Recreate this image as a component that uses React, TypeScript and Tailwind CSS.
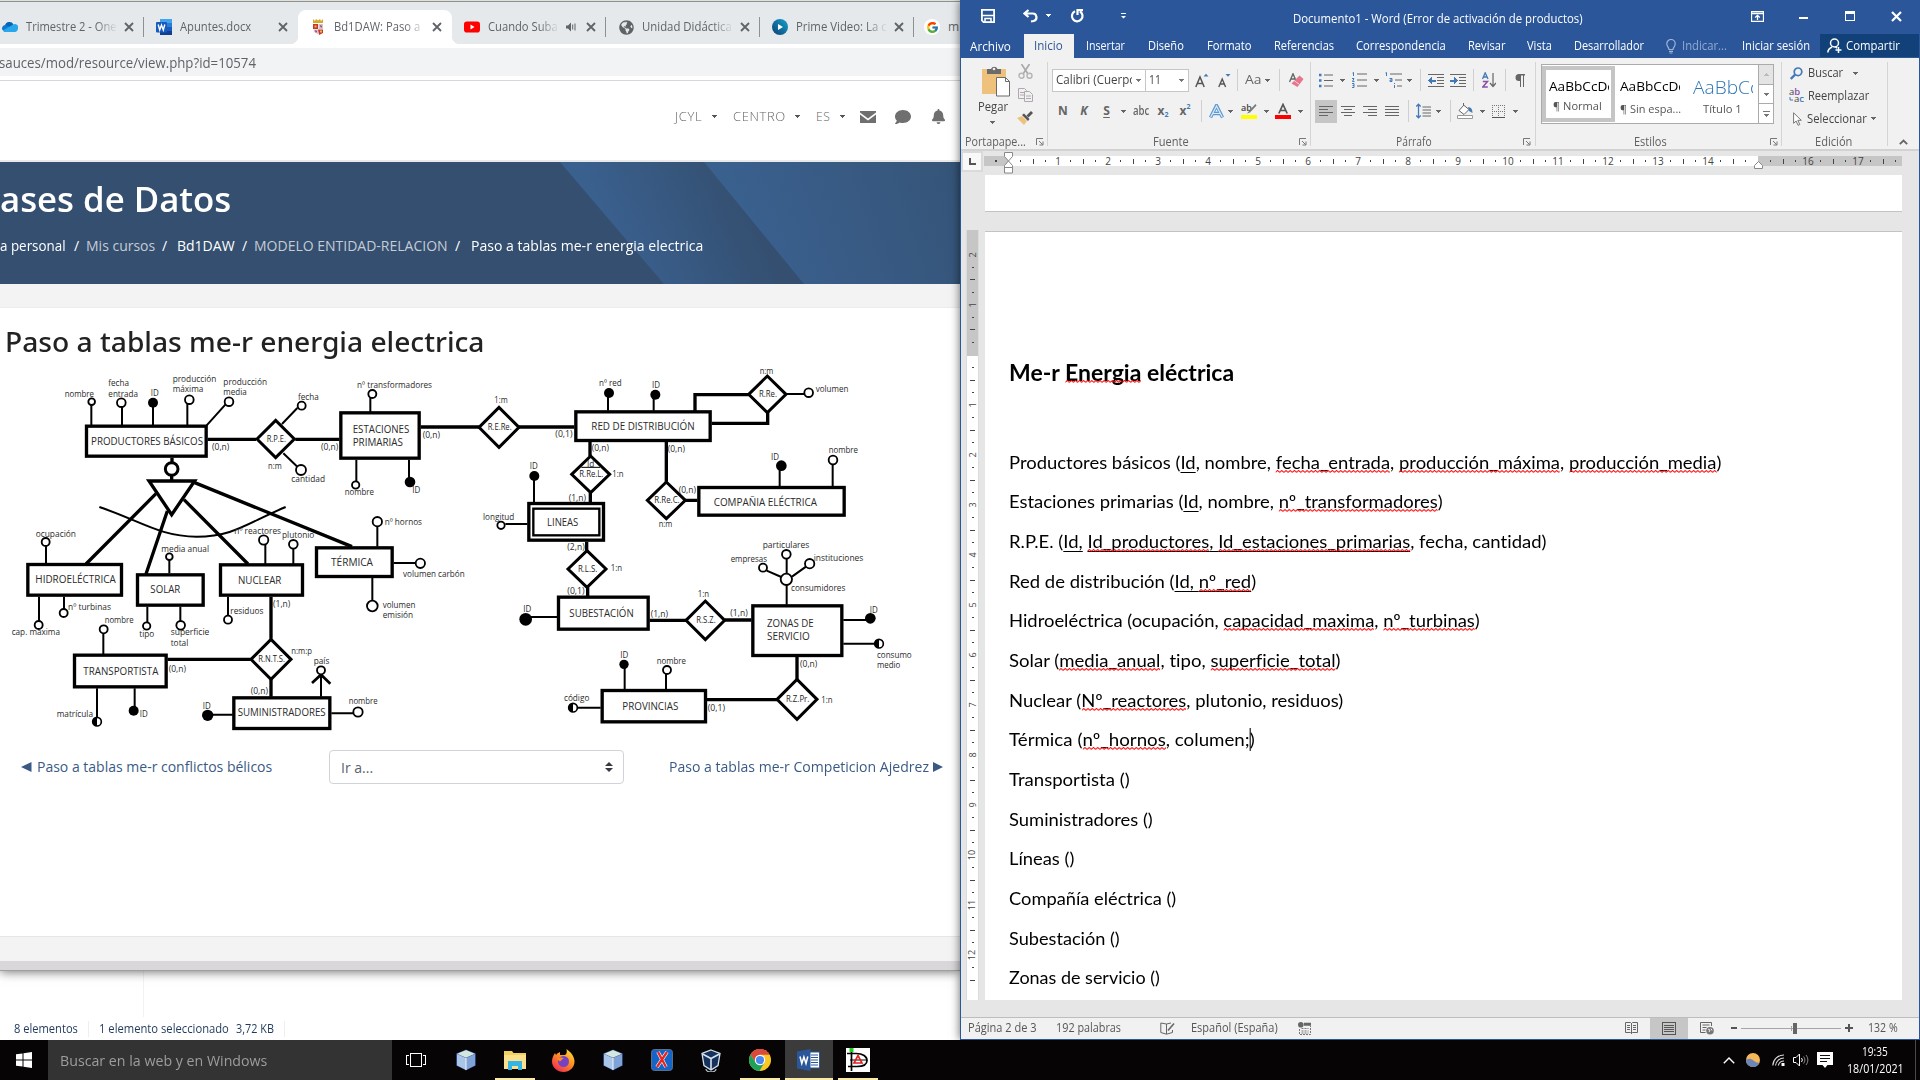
import React, { useLayoutEffect, useRef, useState } from "react";
import type { ReactNode } from "react";
import { FcGoogle } from "react-icons/fc";
import { FaBell, FaComment, FaGlobeAmericas } from "react-icons/fa";

/* ---------- helpers ---------- */

function Fit({ w, className = "", children }: { w: number; className?: string; children: ReactNode }) {
  const ref = useRef<HTMLSpanElement>(null);
  const [k, setK] = useState(1);
  useLayoutEffect(() => {
    if (ref.current) {
      const n = ref.current.offsetWidth;
      if (n > 0) setK(w / n);
    }
  }, [w]);
  return (
    <span className={"block shrink-0 whitespace-nowrap " + className} style={{ width: w }}>
      <span ref={ref} className="inline-block origin-left whitespace-pre" style={{ transform: `scaleX(${k})` }}>
        {children}
      </span>
    </span>
  );
}

function Caret({ className = "" }: { className?: string }) {
  return (
    <svg width="5" height="3" viewBox="0 0 5 3" className={"shrink-0 " + className} shapeRendering="crispEdges">
      <path d="M0 0h5L2.5 3z" fill="currentColor" />
    </svg>
  );
}

function Slot({ className = "", children }: { className?: string; children?: ReactNode }) {
  return <div className={"flex shrink-0 items-center justify-center text-[#666] " + className}>{children}</div>;
}

const Sep = () => <div className="h-[22px] w-px bg-[#cfcfcf]" />;

/* ---------- browser ---------- */

function CloseX() {
  return (
    <svg width="10" height="10" viewBox="0 0 10 10" className="shrink-0">
      <path d="M1 1l8 8M9 1l-8 8" stroke="#5f6368" strokeWidth="1.8" />
    </svg>
  );
}

const OneDrive = () => (
  <svg width="16" height="16" viewBox="0 0 16 16">
    <path d="M3 6.500A4.600 4.600 0 0 1 11.500 5.500L9 9H3z" fill="#0364b8" />
    <path d="M.2 10.500A3.400 3.400 0 0 1 4.500 6.200L13 10.500 8 13H3z" fill="#0f78d4" />
    <path d="M11.300 5.600A3.300 3.300 0 0 1 16 9.800c-.3 2-1.500 3.200-3 3.200H3.500C2 13 1.200 12.300.8 11.500z" fill="#28a8ea" />
  </svg>
);

const WordFile = () => (
  <svg width="16" height="16" viewBox="0 0 16 16">
    <path d="M4 0h12v4H4z" fill="#41a5ee" />
    <path d="M4 4h12v4H4z" fill="#2b7cd3" />
    <path d="M4 8h12v4H4z" fill="#185abd" />
    <path d="M4 12h12v4H4z" fill="#103f91" />
    <rect y="3" width="11" height="10.500" rx="1" fill="#185abd" />
    <path d="M2.200 5.500L3.700 11 5.500 6 7.300 11 8.800 5.500" stroke="#fff" strokeWidth="1.400" fill="none" />
  </svg>
);

const Shield = () => (
  <svg width="12" height="16" viewBox="0 0 12 16">
    <path d="M1 0l2 2 1-2 2 1.500L8 0l1 2 2-2v4H1z" fill="#d6a92b" />
    <path d="M1 5h5v5H1z" fill="#c3372e" />
    <path d="M6.500 5H11v5H6.500z" fill="#d9c0cb" />
    <path d="M1.500 10.500H6V15l-4-2z" fill="#d9c0cb" />
    <path d="M6 10.500h5V14l-4 2z" fill="#c3372e" />
    <path d="M2.500 6.500h2v2h-2zM8 11.500h2v2H8z" fill="#e8b93b" />
    <path d="M8 6l2 1-1 2zM3 11l2 1-1 2z" fill="#7d2a5e" />
  </svg>
);

const YouTube = () => (
  <svg width="16" height="16" viewBox="0 0 16 16">
    <rect y="2.500" width="16" height="11" rx="2.800" fill="#f00" />
    <path d="M6.500 5.500l4 2.500-4 2.500z" fill="#fff" />
  </svg>
);

const Prime = () => (
  <svg width="16" height="16" viewBox="0 0 16 16">
    <defs>
      <linearGradient id="pv" x1="1" y1="0" x2="0" y2="1">
        <stop offset="0" stopColor="#16a3cf" />
        <stop offset="1" stopColor="#0c3e73" />
      </linearGradient>
    </defs>
    <circle cx="8" cy="8" r="8" fill="url(#pv)" />
    <path d="M6 5l5 3-5 3z" fill="#fff" />
  </svg>
);

type TabData = { icon: ReactNode; title: string; w: number; fade?: boolean; active?: boolean; audio?: boolean; sep?: boolean };

const tabs: TabData[] = [
  { icon: <OneDrive />, title: "Trimestre 2 - One", w: 91, fade: true, sep: true },
  { icon: <WordFile />, title: "Apuntes.docx", w: 71 },
  { icon: <Shield />, title: "Bd1DAW: Paso a", w: 86, fade: true, active: true },
  { icon: <YouTube />, title: "Cuando Suba", w: 70, fade: true, audio: true, sep: true },
  { icon: <FaGlobeAmericas size={15} color="#5f6368" />, title: "Unidad Didáctica", w: 90, fade: true, sep: true },
  { icon: <Prime />, title: "Prime Video: La c", w: 91, fade: true, sep: true },
];

function BrowserTab({ t }: { t: TabData }) {
  return (
    <div
      className={
        "relative flex h-[34px] w-[154px] shrink-0 items-center pl-3 " + (t.active ? "rounded-t-lg bg-white" : "")
      }
    >
      {t.active && (
        <>
          <div className="absolute bottom-0 -left-2 size-2 bg-[radial-gradient(circle_at_0_0,#e6e9ec_8px,#fff_8.5px)]" />
          <div className="absolute -right-2 bottom-0 size-2 bg-[radial-gradient(circle_at_100%_0,#e6e9ec_8px,#fff_8.5px)]" />
        </>
      )}
      <div className="flex w-4 shrink-0 justify-center">{t.icon}</div>
      <div
        className={
          "ml-2 w-[92px] overflow-hidden " +
          (t.fade ? (t.audio ? "[mask-image:linear-gradient(to_right,#000_55%,transparent_78%)]" : "[mask-image:linear-gradient(to_right,#000_76%,transparent)]") : "")
        }
      >
        <Fit w={t.w} className="text-[12px] leading-[18px] text-[#5f6368]">
          {t.title}
        </Fit>
      </div>
      {t.audio && (
        <svg width="10" height="10" viewBox="0 0 10 10" className="-ml-3.5 mr-1">
          <path d="M0 3.500h2L5 .5v9l-3-3H0z" fill="#5f6368" />
          <path d="M6.700 2.500v5M9 1.500v7" stroke="#5f6368" strokeWidth="1" />
        </svg>
      )}
      <div className="ml-[6px]">
        <CloseX />
      </div>
      {t.sep && <div className="absolute top-[7px] right-0 h-5 w-px bg-[#8d9196]" />}
    </div>
  );
}

function Banner() {
  return (
    <div className="relative h-[122px] overflow-hidden bg-[#344f70] text-white">
      <svg width="960" height="122" viewBox="0 0 960 122" className="absolute inset-0">
        <defs>
          <linearGradient id="b1" gradientUnits="userSpaceOnUse" x1="610" y1="72" x2="740" y2="18">
            <stop offset="0" stopColor="#3a608e" />
            <stop offset="1" stopColor="#344f70" />
          </linearGradient>
          <linearGradient id="b2" gradientUnits="userSpaceOnUse" x1="750" y1="75" x2="980" y2="0">
            <stop offset="0" stopColor="#3a608e" />
            <stop offset="1" stopColor="#355376" />
          </linearGradient>
        </defs>
        <path d="M560 0h144l100 122H664z" fill="url(#b1)" />
        <path d="M704 0h256v122H804z" fill="url(#b2)" />
      </svg>
      <div className="relative flex h-full flex-col">
        <Fit w={231} className="mt-[12px] text-[34px] leading-[50px] font-semibold">
          ases de Datos
        </Fit>
        <div className="mt-[11px] flex items-center text-[14px] leading-[22px] font-medium">
          <Fit w={66}>a personal</Fit>
          <Fit w={5} className="ml-[8px]">/</Fit>
          <Fit w={69} className="ml-[7px] font-normal text-[#c5ccd5]">Mis cursos</Fit>
          <Fit w={5} className="ml-[7px]">/</Fit>
          <Fit w={58} className="ml-[10px]">Bd1DAW</Fit>
          <Fit w={5} className="ml-[7px]">/</Fit>
          <Fit w={194} className="ml-[7px] font-normal text-[#c5ccd5]">MODELO ENTIDAD-RELACION</Fit>
          <Fit w={5} className="ml-[7px]">/</Fit>
          <Fit w={232} className="ml-[11px]">Paso a tablas me-r energia electrica</Fit>
        </div>
      </div>
    </div>
  );
}

/* ---------- entity-relationship diagram (3 units per pixel) ---------- */

const boxes: [number, number, number, number][] = [
  [255, 344, 623, 443],
  [1018, 304, 1262, 449],
  [79, 759, 369, 860],
  [408, 790, 614, 890],
  [657, 760, 912, 860],
  [945, 709, 1181, 804],
  [219, 1031, 503, 1135],
  [697, 1159, 994, 1260],
  [1723, 301, 2135, 396],
  [2092, 528, 2537, 620],
  [1582, 576, 1815, 695],
  [1671, 857, 1949, 962],
  [2254, 883, 2530, 1041],
  [1802, 1137, 2121, 1240],
];

const diamonds: [number, number, number, number, string, number][] = [
  [827, 387, 56, 56, "R.P.E.", 58],
  [813, 1048, 60, 60, "R.N.T.S.", 80],
  [1497, 352, 60, 60, "R.E.Re.", 72],
  [1772, 493, 57, 55, "R.Re.L.", 72],
  [1999, 571, 57, 55, "R.Re.C.", 76],
  [1761, 777, 57, 55, "R.L.S.", 58],
  [2116, 931, 58, 58, "R.S.Z.", 58],
  [2302, 253, 56, 55, "R.Re.", 54],
  [2391, 1168, 60, 60, "R.Z.Pr.", 70],
];

const heavy =
  "M623 388H768M886 388H1018M1262 351H1440M1556 351H1723M516 443V456M515 498V512M468 551L258 762M502 603L438 792M552 569L744 762M584 518L1056 710M813 860V986M503 1048H752M813 1108V1160M1770 396V438M1771 548V578M1999 396V515M2056 571H2092M1760 695V722M1763 832V858M1949 931H2058M2175 930H2254M2085 304V254H2246M2135 340H2303V306M2391 1041V1108M2121 1169H2331";

const thin =
  "M274 284V346M366 290V346M459 280V346M562 282V346M676 284L620 346M892 294L846 342M850 430L892 470M1111 262V306M1069 449V514M1227 449V516M138 708V760M117 860V934M192 860V898M508 750V790M442 890V938M541 890V934M796 702V762M880 714V762M684 860V918M1132 648V710M1181 759H1248M1117 804V872M310 970V1032M291 1135V1235M404 1135V1202M624 1214H698M963 1092V1160M994 1210H1062M1824 250V302M1961 254V302M2360 252H2412M1602 498V577M1516 642H1582M2339 468V530M2498 462V530M1577 921H1671M2360 745V790M2300 782L2344 801M2418 770L2376 800M2360 824V884M2530 930H2610M2530 1001H2638M1874 1064V1138M1998 1092V1138M1719 1193H1802";

const openDots: [number, number, number][] = [
  [275, 275, 10], [364, 278, 13], [568, 269, 13], [687, 275, 13], [905, 287, 12], [903, 480, 15], [1117, 252, 12],
  [1067, 525, 11], [137, 696, 12], [116, 945, 12], [191, 909, 12], [508, 740, 10], [440, 948, 11], [542, 946, 13],
  [791, 690, 14], [880, 703, 13], [684, 929, 12], [1132, 635, 14], [1261, 760, 14], [1117, 888, 16], [311, 958, 12],
  [963, 1081, 12], [1074, 1206, 14], [2426, 248, 13], [2499, 450, 13], [1503, 646, 11], [2359, 733, 13],
  [2289, 773, 12], [2429, 761, 14], [2359, 808, 17], [2001, 1080, 12],
];

const fullDots: [number, number, number][] = [
  [459, 278, 15], [1230, 516, 16], [401, 1202, 15], [623, 1216, 17], [1827, 249, 15], [1966, 254, 15], [1603, 498, 15],
  [2344, 467, 16], [1577, 928, 19], [2611, 925, 16], [1872, 1063, 14],
];

const halfDots: [number, number][] = [[291, 1235], [2637, 1001], [1719, 1193]];

const names: [number, number, number, string][] = [
  [273, 405, 336, "PRODUCTORES BÁSICOS"],
  [1058, 370, 170, "ESTACIONES"],
  [1058, 409, 151, "PRIMARIAS"],
  [106, 819, 241, "HIDROELÉCTRICA"],
  [451, 849, 90, "SOLAR"],
  [714, 823, 130, "NUCLEAR"],
  [993, 767, 126, "TÉRMICA"],
  [250, 1094, 225, "TRANSPORTISTA"],
  [713, 1218, 264, "SUMINISTRADORES"],
  [1774, 359, 310, "RED DE DISTRIBUCIÓN"],
  [2141, 587, 310, "COMPAÑIA ELÉCTRICA"],
  [1641, 648, 94, "LINEAS"],
  [1708, 920, 193, "SUBESTACIÓN"],
  [2301, 950, 140, "ZONAS DE"],
  [2301, 989, 128, "SERVICIO"],
  [1867, 1199, 168, "PROVINCIAS"],
];

const labels: [number, number, number, string][] = [
  [194, 260, 88, "nombre"], [325, 228, 62, "fecha"], [325, 260, 89, "entrada"], [452, 258, 24, "ID"],
  [518, 214, 131, "producción"], [518, 246, 92, "máxima"], [670, 224, 131, "producción"], [670, 255, 70, "media"],
  [894, 268, 62, "fecha"], [874, 516, 101, "cantidad"], [636, 420, 52, "(0,n)"], [963, 419, 52, "(0,n)"],
  [804, 476, 41, "n:m"], [1071, 233, 225, "nº transformadores"], [1034, 555, 88, "nombre"], [1237, 548, 24, "ID"],
  [1268, 384, 52, "(0,n)"], [107, 679, 121, "ocupación"], [204, 899, 129, "nº turbinas"], [35, 975, 145, "cap. máxima"],
  [484, 725, 143, "media anual"], [418, 980, 45, "tipo"], [512, 975, 116, "superficie"], [512, 1006, 53, "total"],
  [703, 672, 140, "nº reactores"], [846, 683, 97, "plutonio"], [691, 911, 99, "residuos"], [819, 889, 52, "(1,n)"],
  [1154, 644, 112, "nº hornos"], [1209, 799, 185, "volumen carbón"], [1148, 893, 98, "volumen"], [1148, 924, 91, "emisión"],
  [314, 939, 87, "nombre"], [170, 1219, 109, "matrícula"], [419, 1221, 24, "ID"], [506, 1084, 52, "(0,n)"],
  [874, 1032, 62, "n:m:p"], [941, 1061, 47, "país"], [752, 1151, 52, "(0,n)"], [608, 1197, 24, "ID"],
  [1046, 1182, 87, "nombre"], [1483, 277, 40, "1:m"], [1797, 228, 68, "nº red"], [1956, 234, 24, "ID"],
  [2279, 191, 41, "n:m"], [2447, 246, 98, "volumen"], [1666, 380, 52, "(0,1)"], [1775, 421, 52, "(0,n)"],
  [2003, 425, 52, "(0,n)"], [1589, 477, 24, "ID"], [1837, 499, 34, "1:n"], [1706, 571, 52, "(1,n)"],
  [2036, 547, 52, "(0,n)"], [1976, 650, 41, "n:m"], [2313, 450, 24, "ID"], [2486, 428, 88, "nombre"],
  [1449, 629, 94, "longitud"], [1702, 719, 52, "(2,n)"], [1832, 782, 34, "1:n"], [1702, 851, 52, "(0,1)"],
  [2288, 713, 140, "particulares"], [2192, 756, 109, "empresas"], [2441, 751, 149, "instituciones"],
  [2373, 842, 163, "consumidores"], [1570, 906, 24, "ID"], [1952, 920, 52, "(1,n)"], [2093, 860, 34, "1:n"],
  [2191, 916, 52, "(1,n)"], [2609, 909, 24, "ID"], [2631, 1042, 104, "consumo"], [2631, 1073, 70, "medio"],
  [2400, 1069, 52, "(0,n)"], [1861, 1044, 24, "ID"], [1970, 1060, 88, "nombre"], [1692, 1172, 76, "código"],
  [2123, 1201, 52, "(0,1)"], [2464, 1177, 34, "1:n"], [1761, 469, 22, "Id"],
];

function Diagram() {
  return (
    <svg width="960" height="380" viewBox="0 180 2880 1140" className="block overflow-visible font-['Open_Sans',sans-serif]">
      <path d="M298 591C420 632 480 680 590 680S740 640 857 591" fill="none" stroke="#000" strokeWidth="6" />
      <path d={heavy} fill="none" stroke="#000" strokeWidth="10" />
      <path d={thin} fill="none" stroke="#000" strokeWidth="6" />
      <path d="M936 1119L963 1094L991 1121" fill="none" stroke="#000" strokeWidth="8" />
      <path d="M447 513H584L515 614z" fill="#fff" stroke="#000" strokeWidth="10" />
      <circle cx="515" cy="477" r="19" fill="#fff" stroke="#000" strokeWidth="9" />
      {boxes.map(([a, b, c, d]) => (
        <rect key={`${a}-${b}`} x={a + 4.5} y={b + 4.5} width={c - a - 9} height={d - b - 9} fill="#fff" stroke="#000" strokeWidth="10" />
      ))}
      <rect x="1600" y="596" width="198" height="80" fill="none" stroke="#000" strokeWidth="7" />
      {diamonds.map(([x, y, rx, ry, t, w]) => (
        <g key={t}>
          <path d={`M${x - rx} ${y}L${x} ${y - ry}L${x + rx} ${y}L${x} ${y + ry}z`} fill="#fff" stroke="#000" strokeWidth="9" />
          <text x={x - w / 2 + 2} y={y + 8} fontSize="25" fill="#222" textLength={w} lengthAdjust="spacingAndGlyphs">
            {t}
          </text>
        </g>
      ))}
      <path d="M1744 472H1800" stroke="#000" strokeWidth="3" />
      {openDots.map(([x, y, r]) => (
        <circle key={`${x}-${y}`} cx={x} cy={y} r={r} fill="#fff" stroke="#000" strokeWidth="5.500" />
      ))}
      {fullDots.map(([x, y, r]) => (
        <circle key={`${x}-${y}`} cx={x} cy={y} r={r} />
      ))}
      {halfDots.map(([x, y]) => (
        <g key={`${x}-${y}`}>
          <circle cx={x} cy={y} r="13" fill="#fff" stroke="#000" strokeWidth="5" />
          <path d={`M${x} ${y - 13}a13 13 0 0 0 0 26z`} />
        </g>
      ))}
      {names.map(([x, y, w, t]) => (
        <text key={t} x={x} y={y} fontSize="33" fill="#2a2a2a" textLength={w} lengthAdjust="spacingAndGlyphs">
          {t}
        </text>
      ))}
      {labels.map(([x, y, w, t]) => (
        <text key={`${x}-${y}`} x={x} y={y + 1} fontSize="26.500" fill="#2a2a2a" textLength={w} lengthAdjust="spacingAndGlyphs">
          {t}
        </text>
      ))}
    </svg>
  );
}

function Browser() {
  return (
    <div className="relative flex h-[971px] flex-col overflow-hidden border-b border-[#a0a0a0] bg-white shadow-[0_1px_10px_rgba(0,0,0,0.55)]">
      <div className="h-[44px] bg-[#e6e9ec]">
        <div className="h-px bg-[#dfe1dc]" />
        <div className="h-px bg-[#8f918d]" />
        <div className="-ml-[10px] flex w-[970px] overflow-hidden pt-2">
          {tabs.map((t) => (
            <BrowserTab key={t.title} t={t} />
          ))}
          <div className="flex items-center pl-[10px]">
            <div className="flex size-4 items-center justify-center rounded-full bg-white">
              <FcGoogle size={13} />
            </div>
            <span className="ml-2 text-[12px] text-[#5f6368]">m</span>
          </div>
        </div>
      </div>
      <div className="h-[37px] border-b border-[#d5d6dc] py-1">
        <div className="flex h-7 items-center bg-[#f1f3f4]">
          <Fit w={257} className="-ml-px text-[14px] text-[#5f6368]">sauces/mod/resource/view.php?id=10574</Fit>
        </div>
      </div>
      <div className="flex h-[81px] items-center border-b-2 border-[#e9e9e9] pb-2 pl-[675px] text-[12px] font-light text-[#666]">
        <Fit w={27} className="tracking-wider">JCYL</Fit>
        <Caret className="ml-[10px] text-[#555]" />
        <Fit w={53} className="ml-[16px] tracking-wider">CENTRO</Fit>
        <Caret className="ml-[9px] text-[#555]" />
        <Fit w={14} className="ml-[16px] tracking-wider">ES</Fit>
        <Caret className="ml-[10px] text-[#555]" />
        <svg width="16" height="12" viewBox="0 0 16 12" className="ml-[15px]">
          <path d="M0 0h16v1.500L8 7.500 0 1.500z" fill="#6f6f6f" />
          <path d="M0 3.500l8 6 8-6V12H0z" fill="#6f6f6f" />
        </svg>
        <FaComment size={16} color="#6f6f6f" className="ml-[19px]" />
        <FaBell size={15} color="#6f6f6f" className="ml-[20px]" />
      </div>
      <Banner />
      <div className="h-6 border-b border-[#ececec] bg-[#f3f3f3]" />
      <div className="h-[628px] bg-white">
        <Fit w={479} className="ml-[5px] h-[62px] pt-[12px] font-['Noto_Sans',sans-serif] text-[27px] leading-[44px] font-medium text-[#222]">
          Paso a tablas me-r energia electrica
        </Fit>
        <Diagram />
        <div className="flex h-[34px] items-center text-[14px] text-[#3a5a85]">
          <svg width="11" height="10" viewBox="0 0 11 10" className="ml-[21px]">
            <path d="M10.500 0v10L0 5z" fill="currentColor" />
          </svg>
          <Fit w={235} className="-mt-[2px] ml-[5px]">Paso a tablas me-r conflictos bélicos</Fit>
          <div className="ml-[57px] flex h-[34px] w-[295px] items-center justify-between rounded border border-[#d0d4d8] pr-[10px] pl-[11px] text-[#5a636b]">
            <Fit w={32}>Ir a...</Fit>
            <svg width="8" height="10" viewBox="0 0 8 10">
              <path d="M4 0l4 4H0zM4 10l4-4H0z" fill="#343a40" />
            </svg>
          </div>
          <Fit w={260} className="-mt-[2px] ml-[45px]">Paso a tablas me-r Competicion Ajedrez</Fit>
          <svg width="10" height="10" viewBox="0 0 10 10" className="ml-[4px]">
            <path d="M0 0v10l10-5z" fill="currentColor" />
          </svg>
        </div>
      </div>
      <div className="h-[25px] border-t border-[#e6e6e6] bg-[#f3f3f3]" />
      <div className="flex-1 bg-[#d9d7d9]" />
    </div>
  );
}

function Explorer() {
  return (
    <div className="flex flex-1 flex-col bg-white">
      <div className="ml-[143px] h-[46px] border-l border-[#f2f2f2]" />
      <div className="flex flex-1 items-center pl-[14px] text-[12px] text-[#1e395b]">
        <Fit w={64}>8 elementos</Fit>
        <div className="ml-[10px] h-4 w-px bg-[#eee]" />
        <Fit w={130} className="ml-[10px]">1 elemento seleccionado</Fit>
        <Fit w={38} className="ml-[7px]">3,72 KB</Fit>
        <div className="ml-[10px] h-4 w-px bg-[#eee]" />
      </div>
    </div>
  );
}

/* ---------- Word ---------- */

const menu: [string, number, string][] = [
  ["Insertar", 39, "ml-[12px]"],
  ["Diseño", 36, "ml-[23px]"],
  ["Formato", 45, "ml-[23px]"],
  ["Referencias", 60, "ml-[22px]"],
  ["Correspondencia", 90, "ml-[22px]"],
  ["Revisar", 37, "ml-[22px]"],
  ["Vista", 25, "ml-[22px]"],
  ["Desarrollador", 70, "ml-[22px]"],
];

function WordTop() {
  return (
    <div className="bg-[#2b579a] text-white">
      <div className="flex h-[34px] items-start">
        <svg width="14" height="14" viewBox="0 0 14 14" className="mt-[9px] ml-[20px]">
          <path d="M.9.900h12.200v12.200H2.500L.9 11.500z" fill="none" stroke="#fff" strokeWidth="1.800" />
          <path d="M1 6.500h12M4 9.500h6v4H4z" stroke="#fff" strokeWidth="1.500" fill="none" />
        </svg>
        <svg width="15" height="14" viewBox="0 0 15 14" className="mt-[9px] ml-[28px]">
          <path d="M5.500 1L1.500 4.500l4 3.500M2 4.500h7.500a3.800 3.800 0 0 1 1 7.500L8 12.500" fill="none" stroke="#fff" strokeWidth="2.200" />
        </svg>
        <Caret className="mt-[14px] ml-[8px]" />
        <svg width="14" height="14" viewBox="0 0 14 14" className="mt-[9px] ml-[19px]">
          <path d="M5 2.200A5.300 5.300 0 1 0 10 2.500M7.500 6V1.200H13" fill="none" stroke="#fff" strokeWidth="2.200" />
        </svg>
        <svg width="5" height="6" viewBox="0 0 5 6" className="mt-[13px] ml-[37px]">
          <path d="M0 0h5v1H0zM0 3h5L2.500 5.500z" fill="#fff" />
        </svg>
        <Fit w={290} className="mt-[9px] ml-[167px] text-[12px] leading-5">Documento1 - Word (Error de activación de productos)</Fit>
        <svg width="13" height="11" viewBox="0 0 13 11" className="mt-[11px] ml-[168px]">
          <path d="M.5.500h12v10H.5zM.5 2.500h12M6.500 9V4.500M4.200 6.500l2.300-2.200L8.800 6.500" fill="none" stroke="#fff" strokeWidth="1.300" />
        </svg>
        <div className="mt-[17px] ml-[35px] h-[2px] w-[9px] bg-white" />
        <div className="mt-[11px] ml-[37px] h-[10px] w-[10px] border border-t-[3px] border-white" />
        <svg width="11" height="11" viewBox="0 0 11 11" className="mt-[11px] ml-[36px]">
          <path d="M1 1l9 9M10 1l-9 9" stroke="#fff" strokeWidth="2.200" />
        </svg>
      </div>
      <div className="flex h-6 items-center text-[12px] leading-6">
        <Fit w={41} className="ml-[9px] pt-[1px]">Archivo</Fit>
        <div className="ml-[13px] flex h-6 w-[50px] items-center bg-[#f1f1f1] pl-[10px] text-[#2b579a]">
          <Fit w={29}>Inicio</Fit>
        </div>
        {menu.map(([t, w, m]) => (
          <Fit key={t} w={w} className={m}>{t}</Fit>
        ))}
        <svg width="10" height="15" viewBox="0 0 10 15" className="ml-[22px]">
          <path d="M3 10.500C3 8.500 .8 7.500 .8 4.700a4.200 4.200 0 0 1 8.400 0C9.200 7.500 7 8.500 7 10.500zM3 12.300h4M3.500 14h3" fill="none" stroke="#9fb3d3" strokeWidth="1.200" />
        </svg>
        <Fit w={45} className="ml-[6px] text-[#93aace]">Indicar...</Fit>
        <Fit w={68} className="ml-[15px]">Iniciar sesión</Fit>
        <div className="mb-px ml-[10px] flex h-[23px] flex-1 items-center bg-[#124078] pl-[7px]">
          <svg width="15" height="15" viewBox="0 0 15 15">
            <circle cx="7.500" cy="5" r="4" fill="none" stroke="#fff" strokeWidth="1.500" />
            <path d="M.8 14.500C1 11.500 3 10 5 9M8.500 8.800l1.500 1.500M11.500 9v6M8.500 12h6" fill="none" stroke="#fff" strokeWidth="1.500" />
          </svg>
          <Fit w={54} className="ml-[4px]">Compartir</Fit>
        </div>
      </div>
    </div>
  );
}

const Launcher = () => (
  <svg width="8" height="8" viewBox="0 0 8 8" className="shrink-0">
    <path d="M.5 7V.5H7M3 3l3.500 3.500M7 3.500V7H3.500" fill="none" stroke="#777" strokeWidth="1" />
  </svg>
);

function GroupLabel({ w, text, pl, gap }: { w: number; text: string; pl: string; gap?: string }) {
  return (
    <div className={"flex h-[18px] items-center text-[12px] text-[#5f5f5f] " + pl}>
      <Fit w={w}>{text}</Fit>
      {gap && (
        <div className={gap}>
          <Launcher />
        </div>
      )}
    </div>
  );
}

function Lines({ d }: { d: string }) {
  return (
    <svg width="14" height="12" viewBox="0 0 14 12" shapeRendering="crispEdges">
      <path d={d} stroke="#666" strokeWidth="1" />
    </svg>
  );
}

function Ribbon() {
  return (
    <div className="flex h-[93px] border-b-2 border-[#d2d2d2] bg-[#f1f1f1] pt-[4px] text-[#444]">
      {/* Portapapeles */}
      <div className="flex h-[84px] w-[87px] flex-col border-r border-[#d4d4d4] *:shrink-0">
        <div className="flex h-[71px]">
          <div className="ml-[16px] flex w-[34px] flex-col items-center">
            <svg width="28" height="31" viewBox="0 0 28 31" className="mt-[4px] ml-[4px] shrink-0">
              <path d="M0 3h24v25H0z" fill="#eec27d" />
              <path d="M5 3h4a3.500 3.500 0 0 1 6.500 0H19v5H5z" fill="#6b6b6b" />
              <circle cx="12" cy="3" r="1.300" fill="#f1f1f1" />
              <path d="M14.500 11.500h9l4 4v14.500h-13z" fill="#fff" stroke="#6b6b6b" />
              <path d="M23.500 11.500v4h4" fill="none" stroke="#6b6b6b" />
            </svg>
            <Fit w={30} className="mt-[1px] -ml-[2px] text-[12px] leading-[18px]">Pegar</Fit>
            <Caret className="mt-[5px] -ml-[3px] text-[#666]" />
          </div>
          <div className="ml-[6px] flex flex-col items-center">
            <svg width="15" height="15" viewBox="0 0 15 15" className="mt-[2px]">
              <path d="M3.500 0l6.500 10M11.500 0L5 10" stroke="#a8a8a8" strokeWidth="1.600" />
              <circle cx="3.500" cy="11.700" r="2.500" fill="none" stroke="#b5b5b5" strokeWidth="1.400" />
              <circle cx="11.500" cy="11.700" r="2.500" fill="none" stroke="#b5b5b5" strokeWidth="1.400" />
            </svg>
            <svg width="15" height="14" viewBox="0 0 15 14" className="mt-[9px]">
              <path d="M.5.500h6l2 2v8h-8zM2 4.500h4M2 7h4" fill="none" stroke="#b0a8b0" />
              <path d="M6.500 3.500h5l3 3v7h-8z" fill="#f1f1f1" stroke="#b0a8b0" />
              <path d="M8 8h5M8 10.500h5" stroke="#b0a8b0" />
            </svg>
            <svg width="16" height="14" viewBox="0 0 16 14" className="mt-[9px]">
              <path d="M0 7l5-2 5 5-3 4z" fill="#eec27d" />
              <path d="M5 4l2-1.500L12.500 8 11 10z" fill="#555" />
              <path d="M9.500 4.500L14 0l2 2-4.500 4.500z" fill="#555" />
            </svg>
          </div>
        </div>
        <GroupLabel w={61} text="Portapape..." pl="pl-[4px]" gap="ml-[10px]" />
      </div>

      {/* Fuente */}
      <div className="flex h-[84px] w-[263px] flex-col border-r border-[#d4d4d4] *:shrink-0">
        <div className="mt-[6px] ml-[4px] flex h-[24px] items-center">
          <div className="flex h-[23px] w-[94px] shrink-0 items-center border border-[#c6c6c6] bg-white pl-[3px] text-[12px]">
            <div className="w-[76px] overflow-hidden"><Fit w={80}>Calibri (Cuerpo</Fit></div>
            <Caret className="ml-[4px] text-[#777]" />
          </div>
          <div className="-ml-px flex h-[23px] w-[44px] shrink-0 items-center border border-[#c6c6c6] bg-white pl-[3px] text-[12px]">
            <Fit w={12}>11</Fit>
            <Caret className="ml-[18px] text-[#777]" />
          </div>
          <Slot className="w-[25px]">
            <svg width="14" height="15" viewBox="0 0 14 15">
              <path d="M.8 14L5 4l4.200 10M2.500 10.500h5" fill="none" stroke="#555" strokeWidth="1.500" />
              <path d="M8.500 3.500h5L11 .8z" fill="#4279b8" />
            </svg>
          </Slot>
          <Slot className="w-[20px]">
            <svg width="13" height="15" viewBox="0 0 13 15">
              <path d="M.8 14l3.400-8 3.400 8M2 11h4.500" fill="none" stroke="#555" strokeWidth="1.400" />
              <path d="M7.500 1h5L10 3.700z" fill="#4279b8" />
            </svg>
          </Slot>
          <Slot className="w-[7px]"><Sep /></Slot>
          <Slot className="w-[24px] text-[13px] text-[#555]"><Fit w={16}>Aa</Fit></Slot>
          <Slot className="w-[5px]"><Caret /></Slot>
          <Slot className="w-[19px]"><Sep /></Slot>
          <Slot className="w-[14px]">
            <svg width="15" height="15" viewBox="0 0 15 15" className="shrink-0">
              <path d="M.5 9L4 .8 7.500 9M2 6h4" fill="none" stroke="#666" strokeWidth="1.400" />
              <path d="M10.500 2.500l4 3.500-6 8-6-3.500z" fill="#e5768b" />
              <path d="M5 7.500l5.500 4" stroke="#f7d3da" />
            </svg>
          </Slot>
        </div>
        <div className="mt-[7px] ml-[5px] flex h-[24px] items-center text-[12px]">
          <Slot className="w-[20px] font-bold text-[#444]">N</Slot>
          <Slot className="w-[22px] font-bold text-[#444] italic">K</Slot>
          <Slot className="w-[23px] font-bold text-[#444] underline underline-offset-2">S</Slot>
          <Slot className="w-[11px]"><Caret /></Slot>
          <Slot className="w-[24px] font-semibold line-through"><Fit w={16}>abc</Fit></Slot>
          <Slot className="w-[20px] font-bold text-[#555]">x<span className="mt-[9px] text-[7px] text-[#4279b8]">2</span></Slot>
          <Slot className="w-[24px] font-bold text-[#555]">x<span className="mb-[8px] text-[7px] text-[#4279b8]">2</span></Slot>
          <Slot className="w-[8px]"><Sep /></Slot>
          <Slot className="w-[22px]">
            <svg width="15" height="15" viewBox="0 0 15 15">
              <path d="M1.500 13.500L7.500 1.500l6 12M4 9.500h7" fill="none" stroke="#5b9bd5" strokeWidth="3.400" strokeLinejoin="round" />
              <path d="M1.800 13L7.500 2l5.700 11M4 9.500h7" fill="none" stroke="#dfeaf6" strokeWidth="1.200" />
            </svg>
          </Slot>
          <Slot className="w-[7px]"><Caret /></Slot>
          <Slot className="w-[29px]">
            <svg width="16" height="16" viewBox="0 0 16 16" className="overflow-visible">
              <text x="0" y="8" fontSize="9" fontWeight="600" fill="#444">ab</text>
              <path d="M14.500 1L8 8l-2 2.500 3-1 6.500-7z" fill="#777" />
              <path d="M0 12h16v4H0z" fill="#ff0" />
            </svg>
          </Slot>
          <Slot className="w-[6px]"><Caret /></Slot>
          <Slot className="w-[28px]">
            <svg width="16" height="16" viewBox="0 0 16 16">
              <path d="M3.800 10.500L8 1.500l4.200 9M5.200 7.500h5.500" fill="none" stroke="#555" strokeWidth="1.700" />
              <path d="M0 12h16v4H0z" fill="red" />
            </svg>
          </Slot>
          <Slot className="w-[6px]"><Caret /></Slot>
        </div>
        <GroupLabel w={36} text="Fuente" pl="mt-[10px] pl-[105px]" gap="ml-[110px]" />
      </div>

      {/* Párrafo */}
      <div className="flex h-[84px] w-[225px] flex-col border-r border-[#d4d4d4] *:shrink-0">
        <div className="mt-[6px] ml-[4px] flex h-[24px] items-center">
          <Slot className="w-[22px]">
            <svg width="14" height="15" viewBox="0 0 14 15">
              <path d="M5 2h9M5 7.500h9M5 13h9" stroke="#666" />
              <path d="M0 .8h2.500v2.500H0zM0 6.300h2.500v2.500H0zM0 11.800h2.500v2.500H0z" fill="#4279b8" />
            </svg>
          </Slot>
          <Slot className="w-[11px]"><Caret /></Slot>
          <Slot className="w-[23px]">
            <svg width="15" height="16" viewBox="0 0 15 16">
              <path d="M5 2h10M5 8h10M5 14h10" stroke="#666" />
              <path d="M.5 1l1-.5V4M0 6.500h2L.5 9.500h2M0 11.500h2v4H0M.5 13.500H2" fill="none" stroke="#4279b8" />
            </svg>
          </Slot>
          <Slot className="w-[11px]"><Caret /></Slot>
          <Slot className="w-[23px]">
            <svg width="17" height="16" viewBox="0 0 17 16">
              <path d="M5 2h12M10 8h7M12 14h5" stroke="#666" />
              <path d="M.5 1l1-.5V4M4.500 6.500h2.500v3H5V8h2M9.500 11v1M9.500 13v3" fill="none" stroke="#4279b8" />
            </svg>
          </Slot>
          <Slot className="w-[8px]"><Caret /></Slot>
          <Slot className="w-[15px]"><Sep /></Slot>
          <Slot className="w-[16px]">
            <svg width="16" height="13" viewBox="0 0 16 13" shapeRendering="crispEdges">
              <path d="M0 .5h16M9 3.500h7M9 6.500h7M9 9.500h7M0 12.500h16" stroke="#666" />
              <path d="M0 6.500L4 3v2.500h4v2H4V10z" fill="#4279b8" />
            </svg>
          </Slot>
          <Slot className="w-[28px]">
            <svg width="16" height="13" viewBox="0 0 16 13" shapeRendering="crispEdges">
              <path d="M0 .5h16M9 3.500h7M9 6.500h7M9 9.500h7M0 12.500h16" stroke="#666" />
              <path d="M8 6.500L4 3v2.500H0v2h4V10z" fill="#4279b8" />
            </svg>
          </Slot>
          <Slot className="w-[2px]"><Sep /></Slot>
          <Slot className="w-[30px]">
            <svg width="14" height="16" viewBox="0 0 14 16">
              <path d="M.5 7L3.200.800 6 7M1.500 5h3.500" fill="none" stroke="#4279b8" strokeWidth="1.300" />
              <path d="M.8 9.500h4.700L.8 15h5" fill="none" stroke="#8b4fa8" strokeWidth="1.500" />
              <path d="M11 1v13M8 11l3 3.500 3-3.500" fill="none" stroke="#666" strokeWidth="1.200" />
            </svg>
          </Slot>
          <Slot className="w-[2px]"><Sep /></Slot>
          <Slot className="w-[28px]">
            <svg width="10" height="13" viewBox="0 0 10 13">
              <path d="M4 0h6v1.500H9V13H8V1.500H6V13H5V7H4a3.500 3.500 0 0 1 0-7z" fill="#666" />
            </svg>
          </Slot>
        </div>
        <div className="mt-[7px] ml-[4px] flex h-[24px] items-center">
          <Slot className="h-[23px] w-[22px] bg-[#c6c6c6]"><Lines d="M0 1.500h14M0 4.500h9M0 7.500h14M0 10.500h9" /></Slot>
          <Slot className="w-[22px]"><Lines d="M0 1.500h14M3 4.500h8M0 7.500h14M3 10.500h8" /></Slot>
          <Slot className="w-[22px]"><Lines d="M0 1.500h14M5 4.500h9M0 7.500h14M5 10.500h9" /></Slot>
          <Slot className="w-[22px]"><Lines d="M0 1.500h14M0 4.500h14M0 7.500h14M0 10.500h14" /></Slot>
          <Slot className="w-[10px]"><Sep /></Slot>
          <Slot className="w-[20px]">
            <svg width="15" height="16" viewBox="0 0 15 16">
              <path d="M6.500 4h8.500M6.500 7h8.500M6.500 10h8.500M6.500 13h8.500" stroke="#666" />
              <path d="M2.500 1v14M.3 3.500l2.200-2.300 2.200 2.300M.3 12.500l2.200 2.300 2.200-2.300" fill="none" stroke="#4279b8" strokeWidth="1.300" />
            </svg>
          </Slot>
          <Slot className="w-[10px]"><Caret /></Slot>
          <Slot className="w-[14px]"><Sep /></Slot>
          <Slot className="w-[16px]">
            <svg width="16" height="16" viewBox="0 0 16 16">
              <path d="M7 2L2 7.500l5 4 5-5L6.500 2V0" fill="#fff" stroke="#666" />
              <path d="M11 4c3 0 4.500 2 4.500 6L12 8z" fill="#4279b8" />
              <path d="M.5 12.500h15v3H.5z" fill="#fff" stroke="#999" />
            </svg>
          </Slot>
          <Slot className="w-[18px]"><Caret /></Slot>
          <Slot className="w-[15px]">
            <svg width="13" height="13" viewBox="0 0 13 13" shapeRendering="crispEdges">
              <path d="M0 .5h13M0 6.500h13M.5 0v12M6.500 0v12M12.500 0v12" stroke="#777" strokeDasharray="1 1" />
              <path d="M0 12.500h13" stroke="#555" />
            </svg>
          </Slot>
          <Slot className="w-[19px]"><Caret /></Slot>
        </div>
        <GroupLabel w={36} text="Párrafo" pl="mt-[10px] pl-[85px]" gap="ml-[91px]" />
      </div>

      {/* Estilos */}
      <div className="flex h-[84px] w-[246px] flex-col border-r border-[#d4d4d4] *:shrink-0">
        <div className="mt-[2px] ml-[5px] flex h-[60px] w-[233px] border border-[#ababab] bg-white">
          <div className="mt-px flex h-[56px] w-[73px] shrink-0 flex-col border-4 border-[#c5c5c5] pl-[3px]">
            <div className="mt-[7px] w-[60px] overflow-hidden"><Fit w={67} className="text-[12px] leading-[20px] text-black">AaBbCcDd</Fit></div>
            <Fit w={49} className="ml-[4px] text-[11.5px] leading-[24px] text-[#555]">¶ Normal</Fit>
          </div>
          <div className="ml-[5px] flex w-[61px] shrink-0 flex-col pt-[12px]">
            <div className="w-[60px] overflow-hidden"><Fit w={67} className="text-[12px] leading-[20px] text-black">AaBbCcDd</Fit></div>
            <Fit w={61} className="text-[11.5px] leading-[24px] text-[#555]">¶ Sin espa...</Fit>
          </div>
          <div className="ml-[12px] flex w-[60px] shrink-0 flex-col pt-[11px]">
            <div className="w-[60px] overflow-hidden"><Fit w={66} className="text-[18px] leading-[22px] font-light text-[#2e74b5]">AaBbCc</Fit></div>
            <Fit w={39} className="-mt-px ml-[10px] text-[11.5px] leading-[24px] text-[#555]">Título 1</Fit>
          </div>
          <div className="ml-auto flex w-[15px] flex-col border-l border-[#ababab] text-[#777]">
            <div className="flex flex-1 items-center justify-center bg-[#e4e4e4] text-[#bbb]"><Caret className="rotate-180" /></div>
            <div className="flex flex-1 items-center justify-center border-y border-[#ababab]"><Caret /></div>
            <div className="flex flex-1 flex-col items-center justify-center gap-[2px]"><div className="h-px w-[7px] bg-[#777]" /><Caret /></div>
          </div>
        </div>
        <GroupLabel w={33} text="Estilos" pl="mt-[9px] pl-[98px]" gap="ml-[103px]" />
      </div>

      {/* Edición */}
      <div className="flex h-[84px] w-[106px] flex-col border-r border-[#d4d4d4] text-[12px] *:shrink-0">
        <div className="flex h-[22px] items-center pl-[8px]">
          <svg width="13" height="13" viewBox="0 0 13 13">
            <circle cx="8" cy="4.800" r="3.800" fill="none" stroke="#4279b8" strokeWidth="1.700" />
            <path d="M5.200 7.500L.8 12" stroke="#4279b8" strokeWidth="2.400" />
          </svg>
          <Fit w={35} className="ml-[5px]">Buscar</Fit>
          <Caret className="ml-[10px] text-[#666]" />
        </div>
        <div className="flex h-[23px] items-center pl-[7px]">
          <svg width="16" height="15" viewBox="0 0 16 15" className="overflow-visible">
            <text x="0" y="6.500" fontSize="9.500" fill="#444">a<tspan fill="#8b4fa8" fontWeight="600">b</tspan></text>
            <text x="5" y="14" fontSize="9.500" fill="#444">a<tspan fill="#4279b8" fontWeight="600">c</tspan></text>
            <path d="M1 9v3h3" fill="none" stroke="#4279b8" />
          </svg>
          <Fit w={61} className="ml-[3px]">Reemplazar</Fit>
        </div>
        <div className="flex h-[23px] items-center pl-[11px]">
          <svg width="9" height="14" viewBox="0 0 9 14">
            <path d="M.6.800v10.500l2.500-2.300 2 4.300 1.700-.8-2-4.200h3.500z" fill="#fff" stroke="#777" />
          </svg>
          <Fit w={60} className="ml-[5px]">Seleccionar</Fit>
          <Caret className="ml-[4px] text-[#666]" />
        </div>
        <GroupLabel w={37} text="Edición" pl="mt-[3px] pl-[33px]" />
      </div>
      <div className="flex flex-1 items-end justify-center pb-[4px]">
        <svg width="9" height="6" viewBox="0 0 9 6">
          <path d="M.8 5.200L4.500 1.500l3.700 3.700" fill="none" stroke="#666" strokeWidth="1.800" />
        </svg>
      </div>
    </div>
  );
}

function tick(k: number, n: number): string {
  const r = Math.abs(k) % 4;
  if (r === 0) return String(n);
  return r === 2 ? "|" : ".";
}

function HCell({ t }: { t: string }) {
  return (
    <div className="flex h-[10px] w-[12.5px] shrink-0 items-center justify-center text-[10px] leading-[10px] text-[#444]">
      {t === "|" ? <div className="h-[5px] w-px bg-[#444]" /> : t === "." ? <div className="size-[1.500px] bg-[#444]" /> : t}
    </div>
  );
}

function VCell({ t }: { t: string }) {
  return (
    <div className="flex h-[12.5px] w-[13px] shrink-0 items-center justify-center text-[9px] leading-[10px] text-[#444]">
      {t === "|" ? <div className="h-px w-[5px] bg-[#444]" /> : t === "." ? <div className="h-px w-[2px] bg-[#444]" /> : <span className="-rotate-90">{t}</span>}
    </div>
  );
}

const range = (a: number, b: number) => Array.from({ length: b - a + 1 }, (_, i) => a + i);

function HRuler() {
  return (
    <div className="flex h-[24px] items-start">
      <div className="flex h-[21px] w-[22px] items-center justify-center border-2 border-[#dadada] bg-[#f8f8f8]">
        <svg width="7" height="7" viewBox="0 0 7 7"><path d="M1 0v6h6" fill="none" stroke="#555" strokeWidth="2" /></svg>
      </div>
      <div className="relative mt-[5px] ml-[1px] flex h-[10px]">
        <div className="flex w-[24px] justify-center bg-[#c6c6c6]"><HCell t="." /></div>
        <div className="flex w-[750px] bg-white pl-[6.25px]">{range(1, 59).map((k) => <HCell key={k} t={tick(k, k / 4)} />)}</div>
        <div className="flex w-[144px] bg-[#c6c6c6] pl-[6.25px]">{range(61, 71).map((k) => <HCell key={k} t={tick(k, k / 4)} />)}</div>
        <svg width="10" height="23" viewBox="0 0 10 23" className="absolute -top-[4px] left-[20px]">
          <path d="M.5.500h8v4L4.500 9 .5 4.500zM4.500 9l4 4.500v7.500h-8v-7.500zM.5 15.500h8" fill="#fff" stroke="#888" />
        </svg>
        <svg width="10" height="8" viewBox="0 0 10 8" className="absolute top-[5px] left-[770px]">
          <path d="M4.500.500l4 4v3h-8v-3z" fill="#fff" stroke="#888" />
        </svg>
      </div>
    </div>
  );
}

function VRuler() {
  return (
    <div className="mt-[55px] ml-[5px] flex w-[13px] flex-col border-x border-[#dcdcdc]">
      <div className="flex h-[126px] flex-col items-center bg-[#c6c6c6] pt-[18.5px]">{range(1, 8).map((k) => { const v = 9 - k; return <VCell key={k} t={tick(v, v / 4)} />; })}</div>
      <div className="flex h-[644px] flex-col items-center bg-white pt-[5.5px]">{range(1, 50).map((k) => <VCell key={k} t={tick(k, k / 4)} />)}</div>
    </div>
  );
}

function Sq({ children, u }: { children: ReactNode; u?: boolean }) {
  return (
    <span className="relative inline-block leading-[22px]">
      <span className={u ? "underline decoration-1 underline-offset-[3px] [text-decoration-skip-ink:none]" : ""}>{children}</span>
      <svg width="100%" height="3" className="absolute bottom-[1px] left-0">
        <defs>
          <pattern id="zig" width="4" height="3" patternUnits="userSpaceOnUse">
            <path d="M0 2.500L2 .5L4 2.500" fill="none" stroke="#f00" strokeWidth="1" />
          </pattern>
        </defs>
        <rect width="100%" height="3" fill="url(#zig)" />
      </svg>
    </span>
  );
}

const U = ({ children }: { children: ReactNode }) => (
  <span className="underline decoration-1 underline-offset-[3px] [text-decoration-skip-ink:none]">{children}</span>
);

const docLines: { w: number; body: ReactNode }[] = [
  { w: 712, body: <>Productores básicos (<U>Id</U>, nombre, <Sq>fecha_entrada</Sq>, <Sq>producción_máxima</Sq>, <Sq>producción_media</Sq>)</> },
  { w: 434, body: <>Estaciones primarias (<U>Id</U>, nombre, <Sq>nº_transformadores</Sq>)</> },
  { w: 537, body: <>R.P.E. (<U>Id,</U> <Sq u>Id_productores</Sq><U>, </U><Sq u>Id_estaciones_primarias</Sq>, fecha, cantidad)</> },
  { w: 247, body: <>Red de distribución (<U>Id, </U><Sq u>nº_red</Sq>)</> },
  { w: 471, body: <>Hidroeléctrica (ocupación, <Sq>capacidad_maxima</Sq>, <Sq>nº_turbinas</Sq>)</> },
  { w: 332, body: <>Solar (<Sq>media_anual</Sq>, tipo, <Sq>superficie_total</Sq>)</> },
  { w: 334, body: <>Nuclear (<Sq>Nº_reactores</Sq>, plutonio, residuos)</> },
  { w: 246, body: <>Térmica (<Sq>nº_hornos</Sq>, columen;<span className="relative"><span className="absolute top-[-1px] left-0 h-[23px] w-px bg-black" /></span>)</> },
  { w: 121, body: "Transportista ()" },
  { w: 144, body: "Suministradores ()" },
  { w: 65, body: "Líneas ()" },
  { w: 167, body: "Compañía eléctrica ()" },
  { w: 111, body: "Subestación ()" },
  { w: 151, body: "Zonas de servicio ()" },
];

function StatusBar() {
  return (
    <div className="flex h-[22px] items-center border-t border-[#bdbdbd] bg-[#f1f1f1] pb-px text-[12px] leading-[18px] text-[#555]">
      <Fit w={69} className="ml-[7px]">Página 2 de 3</Fit>
      <Fit w={65} className="ml-[19px]">192 palabras</Fit>
      <svg width="15" height="13" viewBox="0 0 15 13" className="ml-[39px]">
        <path d="M6.500 12V2L.8 1v9.500l5.700 1.700 6-1.700V8M6.500 2L11 1" fill="none" stroke="#666" />
        <path d="M8 8.500L14 1.500" stroke="#666" strokeWidth="1.600" />
      </svg>
      <Fit w={87} className="ml-[16px]">Español (España)</Fit>
      <svg width="13" height="13" viewBox="0 0 13 13" className="ml-[20px]">
        <circle cx="2.800" cy="2.800" r="2.800" fill="#666" />
        <path d="M6 1.500h7M6 3h7" stroke="#666" strokeWidth="1.600" />
        <path d="M1.500 7v5.500h11V4M3.500 6.500h7M3.500 9h7M3.500 11h7" fill="none" stroke="#777" strokeDasharray="2 1" />
      </svg>
      <svg width="13" height="12" viewBox="0 0 13 12" className="ml-[314px]">
        <path d="M.5.500h5l1 1 1-1h5v10h-5l-1 1-1-1h-5zM6.500 1v11M2 3.500h3M2 5.500h3M2 7.500h3M8 3.500h3M8 5.500h3M8 7.500h3" fill="none" stroke="#666" />
      </svg>
      <div className="-mb-px ml-[12px] flex h-[21px] w-[38px] items-center justify-center bg-[#c6c6c6]">
        <svg width="14" height="13" viewBox="0 0 14 13" shapeRendering="crispEdges">
          <path d="M.5.500h13v12H.5zM2 3.500h10M2 5.500h10M2 7.500h10M2 9.500h10" fill="none" stroke="#555" />
        </svg>
      </div>
      <svg width="14" height="13" viewBox="0 0 14 13" className="ml-[12px]">
        <path d="M11.500 4V.500H.5v10h5M2.500 3h7M2.500 5.500h4M2.500 8h3" fill="none" stroke="#666" />
        <circle cx="10" cy="8.800" r="3.800" fill="#777" />
        <path d="M8 7l2 1-1 2M11 6.500l1 2" stroke="#f1f1f1" fill="none" />
      </svg>
      <div className="ml-[17px] h-[2px] w-[6px] bg-[#555]" />
      <div className="ml-[4px] flex h-[12px] w-[100px] items-center bg-[linear-gradient(#a6a6a6,#a6a6a6)] bg-[length:100%_1px] bg-center bg-no-repeat">
        <div className="ml-[50px] h-[5px] w-px bg-[#a6a6a6]" />
        <div className="ml-[1px] h-[11px] w-[4px] bg-[#666]" />
      </div>
      <svg width="8" height="8" viewBox="0 0 8 8" className="ml-[4px]"><path d="M0 4h8M4 0v8" stroke="#555" strokeWidth="2" /></svg>
      <Fit w={30} className="ml-[15px]">132 %</Fit>
    </div>
  );
}

function WordWindow() {
  return (
    <div className="relative flex w-[960px] flex-col border-r border-b border-l border-[#2b579a] bg-[#e6e6e6] shadow-[0_0_9px_rgba(0,0,0,0.6)]">
      <WordTop />
      <Ribbon />
      <HRuler />
      <div className="flex h-[825px]">
        <VRuler />
        <div className="ml-[6px] flex w-[917px] flex-col">
          <div className="h-[37px] border-b border-[#c3c3c3] bg-white" />
          <div className="mt-[19px] h-[769px] border-t border-[#c3c3c3] bg-white pl-[24px] font-['Lato',sans-serif] text-black [font-variant-ligatures:none]">
            <Fit w={225} className="mt-[126px] h-[85px] text-[22.5px] leading-[30px] font-bold">
              Me-r <Sq>Energia</Sq> eléctrica
            </Fit>
            {docLines.map((l, i) => (
              <div key={i} className="flex h-[39.65px] items-center text-[17.5px] leading-[22px]">
                <Fit w={l.w}>{l.body}</Fit>
              </div>
            ))}
          </div>
        </div>
      </div>
      <div className="flex-1" />
      <StatusBar />
    </div>
  );
}

/* ---------- taskbar ---------- */

const Cube = () => (
  <svg width="22" height="22" viewBox="0 0 22 22">
    <path d="M11 .5l10 4v12l-10 5-10-5v-12z" fill="#2b3f78" />
    <path d="M11 1l9 3.800-9 4-9-4z" fill="#d3e6e0" />
    <path d="M2 5l9 4v12l-9-4.500z" fill="#a9c6e8" />
    <path d="M20 5l-9 4v12l9-4.500z" fill="#7fa3d6" />
    <path d="M11 9v12" stroke="#eef5fb" />
  </svg>
);

const Folder = () => (
  <svg width="22" height="19" viewBox="0 0 22 19">
    <path d="M0 0h8l1.500 2H22v16H0z" fill="#f2cf62" />
    <path d="M0 4h22v14H0z" fill="#fbe08b" />
    <path d="M4 10h14v9h-4v-4H8v4H4z" fill="#35b4e8" />
  </svg>
);

const Firefox = () => (
  <svg width="23" height="23" viewBox="0 0 23 23">
    <defs>
      <linearGradient id="ff" x1="1" y1="0" x2=".3" y2="1">
        <stop offset="0" stopColor="#fff04a" />
        <stop offset=".45" stopColor="#ff9a1f" />
        <stop offset="1" stopColor="#f0304f" />
      </linearGradient>
    </defs>
    <path d="M14.500 0c4 3 8 7 8 12.500C22.500 18.500 17.500 23 11.500 23S0 18.500 0 12.500C0 9 1.500 6 3 4l1 2c1-1.500 2-2 4-3v3l5 0c2-1 2-4 1.500-6z" fill="url(#ff)" />
    <circle cx="11.500" cy="12.500" r="5.500" fill="#7542c4" />
    <path d="M5 10c2-2 5-2 7-.5-3 .5-2 2-4 3z" fill="#ff8a1f" />
  </svg>
);

const Oxygen = () => (
  <svg width="22" height="22" viewBox="0 0 22 22">
    <rect x=".5" y=".5" width="21" height="21" rx="3" fill="#1565c8" stroke="#5d6f86" />
    <path d="M7 3l8 15M16 3L6 18" stroke="#fff" strokeWidth="3.600" />
    <path d="M7 3l8 15M16 3L6 18" stroke="#e5261f" strokeWidth="2.400" />
  </svg>
);

const VBox = () => (
  <svg width="20" height="23" viewBox="0 0 20 23">
    <path d="M10 1l9 3.500-2 12L10 21l-7-4.500-2-12z" fill="#16325c" stroke="#d7e2ee" strokeWidth="1.300" />
    <path d="M1.500 5L10 9.500 18.500 5M10 9.500V21" fill="none" stroke="#d7e2ee" strokeWidth="1.600" />
    <path d="M5 20a5 3 0 0 0 10 0" fill="none" stroke="#aebfce" strokeWidth="1.300" />
  </svg>
);

const Chrome = () => (
  <svg width="22" height="22" viewBox="0 0 22 22">
    <circle cx="11" cy="11" r="11" fill="#f9c825" />
    <path d="M11 11L1.500 5.500A11 11 0 0 1 20.500 5.500H11z" fill="#d94a3c" />
    <path d="M11 0A11 11 0 0 0 1.500 5.500L6.500 13.500 11 5.500h9.500A11 11 0 0 0 11 0z" fill="#d94a3c" />
    <path d="M1.500 5.500A11 11 0 0 0 10.500 22l5-8.500L11 16l-4.500-2.500z" fill="#1da15b" />
    <circle cx="11" cy="11" r="5.200" fill="#fff" />
    <circle cx="11" cy="11" r="4.100" fill="#4a88ee" />
  </svg>
);

const WordApp = () => (
  <svg width="23" height="22" viewBox="0 0 23 22">
    <path d="M12 3h10.500v16H12z" fill="#fff" stroke="#2b579a" />
    <path d="M14 6h7M14 8.500h7M14 11h7M14 13.500h7M14 16h7" stroke="#2b579a" />
    <path d="M0 2.500L13.500 0v22L0 19.500z" fill="#2b579a" />
    <path d="M3 7.500L4.800 14.500 6.900 8l2.100 6.500 1.800-7" fill="none" stroke="#fff" strokeWidth="1.500" />
  </svg>
);

const Dia = () => (
  <svg width="24" height="24" viewBox="0 0 24 24">
    <path d="M0 0h24v24H0z" fill="#fff" />
    <path d="M5.500 3v20M1 5.500h9c7 0 11 3 11 7s-4 6-10 6H2" fill="none" stroke="#000" strokeWidth="1.700" />
    <path d="M4 12h17" stroke="#000" />
    <path d="M8 15l4-7.500 4 7.500z" fill="none" stroke="#e02020" strokeWidth="1.600" />
    <path d="M3.500 0h4v4h-4z" fill="#1fd01f" />
  </svg>
);

const apps: { icon: ReactNode; line?: string; bg?: boolean }[] = [
  { icon: <Cube /> },
  { icon: <Folder />, line: "w-10" },
  { icon: <Firefox /> },
  { icon: <Cube /> },
  { icon: <Oxygen /> },
  { icon: <VBox /> },
  { icon: <Chrome />, line: "w-10" },
  { icon: <WordApp />, line: "w-12", bg: true },
  { icon: <Dia />, line: "w-10" },
];

function Taskbar() {
  return (
    <div className="flex h-[40px] bg-[#060404] text-white">
      <div className="flex w-12 items-center justify-center">
        <svg width="16" height="16" viewBox="0 0 16 16">
          <path d="M0 2.300L6.500 1.400v6.100H0zM7.500 1.200L16 0v7.500H7.500zM0 8.500h6.500v6.100L0 13.700zM7.500 8.500H16V16l-8.500-1.200z" fill="#fff" />
        </svg>
      </div>
      <div className="flex w-[344px] items-center bg-[#333] pl-3 text-[14px] text-[#9d9d9d]">
        <Fit w={207}>Buscar en la web y en Windows</Fit>
      </div>
      <div className="flex w-[49px] items-center pl-[14px]">
        <svg width="20" height="14" viewBox="0 0 20 14" shapeRendering="crispEdges">
          <path d="M4.500.500h11v13h-11zM3 2.500H.5v9H3M17 2.500h2.500v9H17" fill="none" stroke="#fff" />
        </svg>
      </div>
      {apps.map((a, i) => (
        <div key={i} className="flex w-[49px] justify-center">
          <div className={"flex w-12 flex-col items-center " + (a.bg ? "bg-[#3b3b3b]" : "")}>
            <div className="flex h-[38px] items-center pt-[2px]">{a.icon}</div>
            {a.line && <div className={"h-[2px] bg-[#fbeaa8] " + a.line} />}
          </div>
        </div>
      ))}
      <div className="ml-auto flex items-center">
        <svg width="12" height="7" viewBox="0 0 12 7"><path d="M.8 6.200L6 1l5.200 5.200" fill="none" stroke="#fff" strokeWidth="1.400" /></svg>
        <svg width="14" height="14" viewBox="0 0 14 14" className="ml-[11px]">
          <circle cx="7" cy="7" r="7" fill="#f7b955" />
          <path d="M0 7c2.500-2 5-1.500 7.500.5S12 10 13.500 9.500A7 7 0 0 1 0 7z" fill="#6d86b9" />
        </svg>
        <svg width="13" height="12" viewBox="0 0 13 12" className="ml-[12px]">
          <path d="M.8 11.500A11 11 0 0 1 12 1M3.500 11.500A8.500 8.500 0 0 1 12 4M6.300 11.500A6 6 0 0 1 12 7" fill="none" stroke="#ddd" strokeWidth="1.100" />
          <path d="M9.500 9h3v3h-3z" fill="#fff" />
        </svg>
        <svg width="16" height="14" viewBox="0 0 16 14" className="ml-[8px]">
          <path d="M.5 4.500H3L6.500 1v12L3 9.500H.5zM8.500 5a3 3 0 0 1 0 4" fill="none" stroke="#fff" />
          <path d="M10.500 3.500a5 5 0 0 1 0 7M13 2a7.500 7.500 0 0 1 0 10" fill="none" stroke="#888" />
        </svg>
        <svg width="16" height="16" viewBox="0 0 16 16" className="ml-[8px]">
          <path d="M0 0h16v13h-5.500L8 16l-2.500-3H0z" fill="#fff" />
          <path d="M3 3.500h10M3 6.500h10M3 9.500h7" stroke="#111" strokeWidth="1.200" />
        </svg>
        <div className="ml-[13px] flex w-[58px] flex-col items-center pb-[1px] text-[12px] leading-[17px]">
          <Fit w={26}>19:35</Fit>
          <Fit w={57}>18/01/2021</Fit>
        </div>
        <div className="mr-[4px] ml-[11px] h-10 w-px bg-[#4a4a4a]" />
      </div>
    </div>
  );
}

export default function App() {
  return (
    <div className="flex h-[1080px] w-[1920px] flex-col overflow-hidden bg-white font-['Open_Sans',sans-serif]">
      <div className="flex h-[1040px] overflow-hidden">
        <div className="flex w-[960px] flex-col">
          <Browser />
          <Explorer />
        </div>
        <WordWindow />
      </div>
      <Taskbar />
    </div>
  );
}
